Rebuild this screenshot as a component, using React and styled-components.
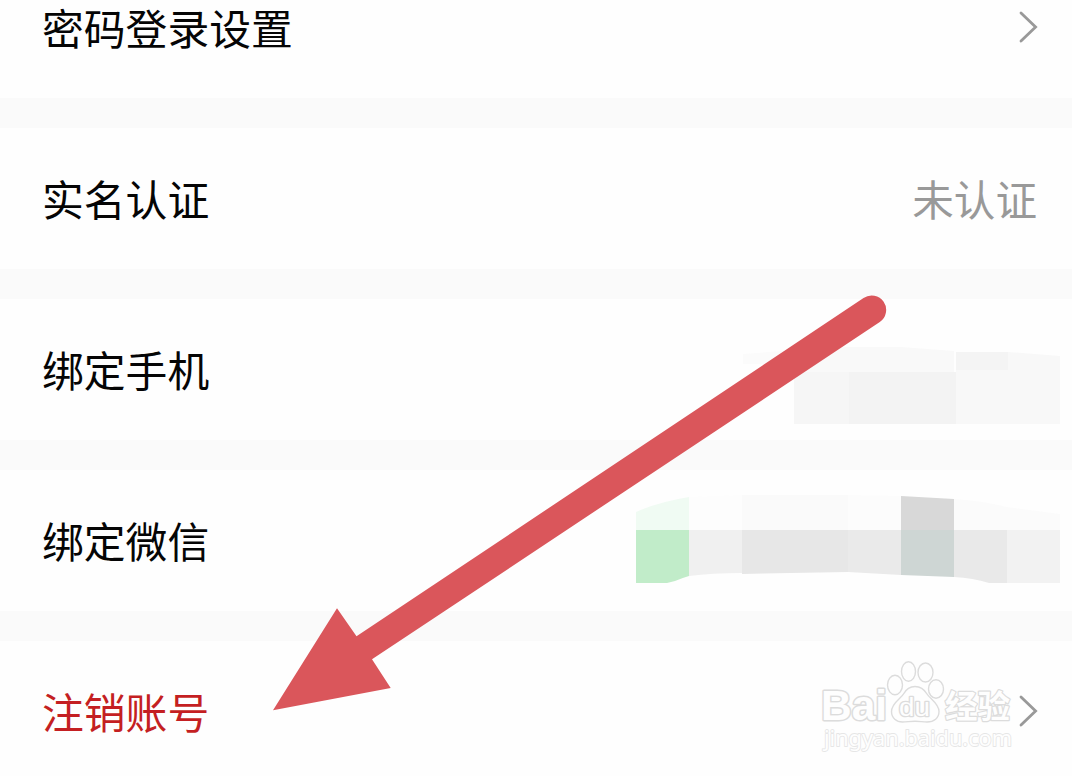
import React from "react";
import styled, { createGlobalStyle } from "styled-components";

const GlobalStyle = createGlobalStyle`
  body {
    margin: 0;
    background-color: #fafafa;
    font-family: "Noto Sans CJK SC", "Liberation Sans", sans-serif;
  }
`;

const Page = styled.main`
  position: relative;
  height: 776px;
  overflow: hidden;
`;

/* the list is scrolled, so the first row is partly above the top edge */
const List = styled.div`
  display: flex;
  flex-direction: column;
  gap: 30px;
  margin-top: -43px;
`;

const Row = styled.div`
  display: flex;
  align-items: center;
  justify-content: space-between;
  box-sizing: border-box;
  height: 141px;
  padding: 0 35px 0 42px;
  background-color: #fefefe;
`;

const Label = styled.span`
  padding-bottom: 2px;
  color: ${({ danger }) => (danger ? "#c41f22" : "#050505")};
  font-size: 41.8px;
  line-height: 50px;
  white-space: nowrap;
`;

const Value = styled.span`
  padding-bottom: 2px;
  color: #999999;
  font-size: 41.6px;
  line-height: 50px;
`;

const Chevron = styled.svg`
  width: 19px;
  height: 32px;
  margin: 0 -1px 2px 0;
  fill: none;
  stroke: #999999;
  stroke-width: 2.8;
  stroke-linecap: round;
`;

const Mosaic = styled.svg`
  flex: none;
  height: 141px;
  margin-right: -23px;
`;

const Arrow = styled.svg`
  position: absolute;
  left: 0;
  top: 0;
  fill: #da565b;
`;

const Watermark = styled.svg`
  position: absolute;
  left: 810px;
  top: 650px;
  fill: #fefefe;
  stroke: #dcdcdc;
  stroke-width: 1.4;
  stroke-linejoin: round;
`;

const Brand = styled.text`
  font-family: "Liberation Sans", sans-serif;
  font-weight: bold;
  font-size: 42px;
  stroke-width: 3;
  paint-order: stroke;
`;

const BrandDu = styled.text`
  font-family: "Liberation Sans", sans-serif;
  font-size: 25px;
  stroke-width: 2.6;
  paint-order: stroke;
`;

const BrandCn = styled.text`
  font-family: "Noto Sans CJK SC", sans-serif;
  font-weight: bold;
  font-size: 32px;
  stroke-width: 2.4;
  paint-order: stroke;
`;

const Site = styled.text`
  font-family: "Noto Sans", sans-serif;
  font-size: 22px;
  stroke: #e6e6e6;
  stroke-width: 1.8;
  paint-order: stroke;
`;

const ChevronIcon = () => (
  <Chevron viewBox="0 0 19 32">
    <path d="M2 2l14.6 14L2 30" />
  </Chevron>
);

const PhoneMosaic = () => (
  <Mosaic width="317" viewBox="743 299 317 141">
    <path d="M743 354l53-4v14h-53z" fill="#fbfbfb" />
    <path d="M796 350l52-3h53l53 4v21H796z" fill="#f9f9f9" />
    <path d="M796 372h53v52h-55v-52z" fill="#f6f6f6" />
    <path d="M849 372h107v52H849z" fill="#f3f3f3" />
    <path d="M956 352h52l52 4v68H956z" fill="#f8f8f8" />
    <path d="M956 352h52v18h-52z" fill="#f4f4f4" />
  </Mosaic>
);

const WechatMosaic = () => (
  <Mosaic width="424" viewBox="636 470 424 141">
    <path d="M636 512q22-10 53-15v33h-53z" fill="#f0fbf3" />
    <path d="M689 497l53-2v35h-53z" fill="#fdfdfd" />
    <path d="M742 495h106v35H742z" fill="#fafafa" />
    <path d="M848 495l53 1v34h-53z" fill="#fcfcfc" />
    <path d="M954 499q30 2 53 8l53 7v16H954z" fill="#fbfbfb" />
    <path d="M636 530h53v46q-7 2-14 5l-8 2h-31z" fill="#c1ecc9" />
    <path d="M689 530h53v43q-30 0-53 3z" fill="#f0f0f0" />
    <path d="M742 530h106v42l-106 2z" fill="#e7e7e7" />
    <path d="M848 530h53v45l-53-3z" fill="#eaeaea" />
    <path d="M901 496l53 3v31h-53z" fill="#d8d8d8" />
    <path d="M901 530h53v47l-53-2z" fill="#ced6d4" />
    <path d="M954 530h53v53h-18q-16-5-35-6z" fill="#e9e9e9" />
    <path d="M1007 530h53v53h-53z" fill="#f2f2f2" />
  </Mosaic>
);

const PointerArrow = () => (
  <Arrow width="1072" height="776" viewBox="0 0 1072 776">
    <path d="M273 710.3L337 608.3L356.5 636.3L863.5 298A14.5 14.5 0 0 1 879.8 322L372 659.3L390.7 688Z" />
  </Arrow>
);

const BaiduWatermark = () => (
  <Watermark width="215" height="110" viewBox="810 650 215 110">
    <Brand x="821" y="720" textLength="66" lengthAdjust="spacingAndGlyphs">Bai</Brand>
    <ellipse cx="895" cy="685" rx="7.5" ry="9.7" />
    <ellipse cx="908.5" cy="671.5" rx="7" ry="9.8" />
    <ellipse cx="925.5" cy="672.5" rx="7.5" ry="9.5" />
    <ellipse cx="936" cy="689" rx="7.5" ry="9.2" />
    <path d="M915 686.500c-5 0-9 3-11.500 7.500s-12 9-12 17.500c0 6.500 5 10.500 11 10.500 4 0 8-.8 12.500-.8s8 .8 12 .8c7 0 12-4 12-10.500 0-8-9-12.500-12-17.500s-7-7.500-12-7.500z" />
    <BrandDu x="899" y="716" textLength="31" lengthAdjust="spacingAndGlyphs">du</BrandDu>
    <BrandCn x="945" y="718" textLength="65" lengthAdjust="spacingAndGlyphs">经验</BrandCn>
    <Site x="824" y="746" textLength="188" lengthAdjust="spacingAndGlyphs">jingyan.baidu.com</Site>
  </Watermark>
);

const App = () => (
  <>
    <GlobalStyle />
    <Page>
      <List>
        <Row>
          <Label>密码登录设置</Label>
          <ChevronIcon />
        </Row>
        <Row>
          <Label>实名认证</Label>
          <Value>未认证</Value>
        </Row>
        <Row>
          <Label>绑定手机</Label>
          <PhoneMosaic />
        </Row>
        <Row>
          <Label>绑定微信</Label>
          <WechatMosaic />
        </Row>
        <Row>
          <Label danger>注销账号</Label>
          <ChevronIcon />
        </Row>
      </List>
      <BaiduWatermark />
      <PointerArrow />
    </Page>
  </>
);

export default App;
